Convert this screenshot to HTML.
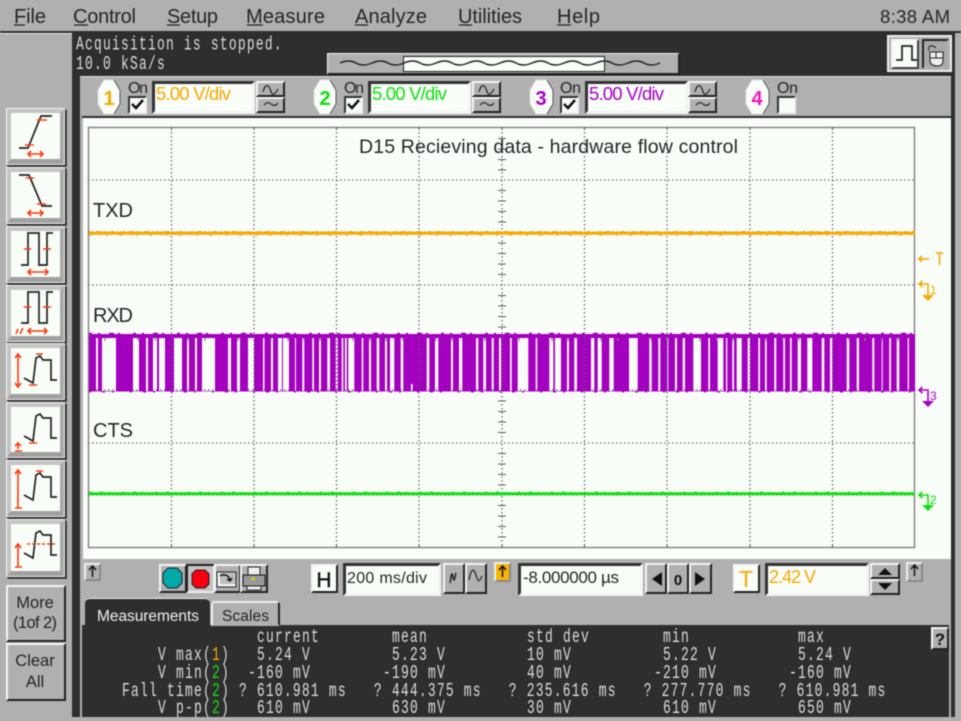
<!DOCTYPE html>
<html><head><meta charset="utf-8"><style>
html,body{margin:0;padding:0;background:#b0b0b0}
#w{position:relative;width:961px;height:721px;overflow:hidden;background:#b0b0b0;filter:blur(.45px)}
#w div{position:absolute;box-sizing:border-box}
.d{background:#2e2e2e}
.g{background:#b0b0b0}
.b{background:#b0b0b0;border:2px solid;border-color:#f4f4f4 #222 #222 #f4f4f4}
.p{background:#a8a8a8;border:2px solid;border-color:#222 #eee #eee #222}
.i{background:#f8fdf8;border:3px solid;border-color:#333 #f4f4f4 #f4f4f4 #333}
.l{background:#f8fdf8;border:5px solid;border-color:#c4c4c4 #a8a8a8 #a0a0a0 #c4c4c4;outline:1px solid #f4f4f4;outline-offset:-1px;border-bottom-width:6px;box-shadow:1px 1px 0 #222,2px 2px 0 #444}
.c{background:#f8fdf8;border:2px solid;border-color:#333 #eee #eee #333}
svg{position:absolute;left:0;top:0}
text{font-family:"Liberation Sans",sans-serif;fill:#262626;white-space:pre}
.m{font-family:"Liberation Mono",monospace;font-size:18px;fill:#dcdcdc;letter-spacing:1.7px}
.r{fill:none;stroke:#fa3c10;stroke-width:1.6}
.k{fill:none;stroke:#222;stroke-width:1.7}
</style></head><body><div id="w">
<div class="d" style="left:0;top:31px;width:961px;height:2px"></div>
<div style="left:0;top:33px;width:72px;height:1px;background:#eee"></div>
<div class="d" style="left:72px;top:33px;width:883px;height:684px"></div>
<div class="g" style="left:80px;top:76px;width:871px;height:641px"></div>
<div style="left:80px;top:76px;width:871px;height:1px;background:#ddd"></div>
<div class="d" style="left:82px;top:116px;width:869px;height:2px"></div>
<div style="left:83px;top:118px;width:868px;height:441px;background:#f8fdf8"></div>
<div class="d" style="left:82px;top:625px;width:867px;height:92px"></div>
<div class="d" style="left:85px;top:598px;width:125px;height:30px;border-radius:5px 5px 0 0;border-top:1px solid #eee"></div>
<div class="g" style="left:85px;top:717px;width:866px;height:2px"></div>

<!-- left buttons -->
<div class="l" style="left:6px;top:108px;width:59px;height:57px"></div>
<div class="l" style="left:6px;top:167px;width:59px;height:57px"></div>
<div class="l" style="left:6px;top:226px;width:59px;height:57px"></div>
<div class="l" style="left:6px;top:285px;width:59px;height:57px"></div>
<div class="l" style="left:6px;top:343px;width:59px;height:57px"></div>
<div class="l" style="left:6px;top:402px;width:59px;height:56px"></div>
<div class="l" style="left:6px;top:460px;width:59px;height:57px"></div>
<div class="l" style="left:6px;top:519px;width:59px;height:58px"></div>
<div class="b" style="left:6px;top:585px;width:60px;height:57px"></div>
<div class="b" style="left:6px;top:643px;width:60px;height:58px"></div>

<!-- channel row -->
<div class="c" style="left:128px;top:96px;width:19px;height:18px"></div>
<div class="i" style="left:152px;top:81px;width:103px;height:33px"></div>
<div class="b" style="left:256px;top:81px;width:29px;height:16px"></div>
<div class="b" style="left:256px;top:97px;width:29px;height:16px"></div>
<div class="c" style="left:344px;top:96px;width:19px;height:18px"></div>
<div class="i" style="left:368px;top:81px;width:103px;height:33px"></div>
<div class="b" style="left:472px;top:81px;width:29px;height:16px"></div>
<div class="b" style="left:472px;top:97px;width:29px;height:16px"></div>
<div class="c" style="left:560px;top:96px;width:19px;height:18px"></div>
<div class="i" style="left:585px;top:81px;width:103px;height:33px"></div>
<div class="b" style="left:688px;top:81px;width:29px;height:16px"></div>
<div class="b" style="left:688px;top:97px;width:29px;height:16px"></div>
<div class="c" style="left:777px;top:96px;width:19px;height:18px"></div>

<!-- timeline -->
<div class="b" style="left:327px;top:53px;width:353px;height:22px;border-width:1px 2px 2px 1px"></div>
<div style="left:403px;top:56px;width:202px;height:16px;background:#f8fdf8;border:1px solid #222"></div>

<!-- top right -->
<div style="left:887px;top:35px;width:65px;height:37px;background:#b0b0b0;border:2px solid #eee"></div>
<div class="b" style="left:891px;top:39px;width:28px;height:30px;background:#f8fdf8;border-color:#f4f4f4 #444 #444 #f4f4f4"></div>
<div class="p" style="left:922px;top:39px;width:27px;height:30px;border-color:#222 #b0b0b0 #b0b0b0 #222"></div>

<!-- bottom row -->
<div class="b" style="left:84px;top:563px;width:17px;height:18px;border-color:#eee #888 #888 #eee"></div>
<div class="b" style="left:159px;top:564px;width:28px;height:29px"></div>
<div class="p" style="left:186px;top:564px;width:29px;height:29px;background:#c4c4c4;border-color:#222 #eee #eee #222"></div>
<div class="b" style="left:214px;top:564px;width:27px;height:29px"></div>
<div class="b" style="left:240px;top:564px;width:28px;height:29px"></div>
<div class="b" style="left:311px;top:564px;width:27px;height:29px;background:#f8fdf8"></div>
<div class="i" style="left:343px;top:563px;width:98px;height:33px"></div>
<div class="b" style="left:443px;top:563px;width:22px;height:31px"></div>
<div class="b" style="left:465px;top:563px;width:22px;height:31px"></div>
<div class="b" style="left:494px;top:562px;width:17px;height:20px;background:#fbb400;border-color:#eee #888 #888 #eee"></div>
<div class="i" style="left:518px;top:563px;width:125px;height:33px"></div>
<div class="b" style="left:645px;top:563px;width:22px;height:31px"></div>
<div class="b" style="left:667px;top:563px;width:22px;height:31px"></div>
<div class="b" style="left:689px;top:563px;width:23px;height:31px"></div>
<div class="b" style="left:733px;top:564px;width:27px;height:29px;background:#f8fdf8"></div>
<div class="i" style="left:765px;top:563px;width:104px;height:33px"></div>
<div class="b" style="left:870px;top:563px;width:30px;height:16px"></div>
<div class="b" style="left:870px;top:579px;width:30px;height:16px"></div>
<div class="b" style="left:906px;top:562px;width:17px;height:20px;border-color:#eee #888 #888 #eee"></div>
<div class="g" style="left:211px;top:601px;width:69px;height:25px;border:2px solid;border-color:#eee #222 transparent #eee;border-radius:4px 4px 0 0"></div>
<div class="b" style="left:931px;top:627px;width:18px;height:23px"></div>

<svg width="961" height="721" viewBox="0 0 961 721">
<!-- menu -->
<g font-size="20">
<text x="14" y="23" textLength="32">File</text>
<text x="73" y="23" textLength="63">Control</text>
<text x="167" y="23" textLength="51">Setup</text>
<text x="246" y="23" textLength="79">Measure</text>
<text x="355" y="23" textLength="72">Analyze</text>
<text x="458" y="23" textLength="64">Utilities</text>
<text x="557" y="23" textLength="43">Help</text>
<text x="880" y="23" textLength="70" font-size="18.5">8:38 AM</text>
</g>
<path d="M14 25h11M74 25h14M167 25h13M247 25h16M355 25h13M459 25h13M557 25h14" stroke="#222" stroke-width="1.2"/>

<!-- status -->
<text class="m" transform="translate(76,49.5) scale(.72,1.1)">Acquisition is stopped.</text>
<text class="m" transform="translate(76,69) scale(.72,1.1)">10.0 kSa/s</text>

<!-- timeline wave -->
<path d="M340 63q9-4 16 0t16 0 16 0 16 0 16 0 16 0 16 0 16 0 16 0 16 0 16 0 16 0 16 0 16 0 16 0 16 0 16 0 16 0 16 0 16 0" fill="none" stroke="#222" stroke-width="1.4"/>

<!-- top right icons -->
<path d="M896 60h6V46h10v14h5" class="k"/>
<path d="M929 51c-2-5 3-7 7-3" fill="none" stroke="#222"/>
<path d="M930 52h13v9q0 5-6 5t-7-5z" fill="#eee" stroke="#222"/>
<path d="M930 58h13M936 52v6" stroke="#222"/>

<!-- channels -->
<g stroke="#ddd" fill="#f8fdf8">
<polygon points="104,80 114,80 120,90 120,104 114,114 104,114 98,104 98,90"/>
<polygon points="320,80 330,80 336,90 336,104 330,114 320,114 314,104 314,90"/>
<polygon points="536,80 547,80 553,90 553,104 547,114 536,114 530,104 530,90"/>
<polygon points="752,80 763,80 769,90 769,104 763,114 752,114 746,104 746,90"/>
</g>
<path d="M114 80l6 10v14l-6 10M330 80l6 10v14l-6 10M547 80l6 10v14l-6 10M763 80l6 10v14l-6 10" fill="none" stroke="#555"/>
<g font-size="20" font-weight="bold" text-anchor="middle">
<text x="109" y="105" style="fill:#f8a800">1</text>
<text x="325" y="105" style="fill:#10e010">2</text>
<text x="541" y="105" style="fill:#a800c8">3</text>
<text x="757" y="105" style="fill:#f018c0">4</text>
</g>
<g font-size="16">
<text x="128" y="93" textLength="20">On</text>
<text x="344" y="93" textLength="20">On</text>
<text x="560" y="93" textLength="21">On</text>
<text x="777" y="93" textLength="21">On</text>
</g>
<path d="M132 104l4 4 7-8M348 104l4 4 7-8M564 104l4 4 7-8" fill="none" stroke="#111" stroke-width="2.6"/>
<g font-size="18.5">
<text x="156" y="100" textLength="75" style="fill:#f8a800">5.00 V/div</text>
<text x="372" y="100" textLength="75" style="fill:#10e010">5.00 V/div</text>
<text x="589" y="100" textLength="75" style="fill:#a800c8">5.00 V/div</text>
</g>
<g fill="none" stroke="#222" stroke-width="1.2">
<path d="M263 92c2-8 5-8 7-3s2 6 4 5 3-3 4-5"/>
<path d="M264 105c3-3 5-3 7-1s5 2 7-1"/>
<path d="M479 92c2-8 5-8 7-3s2 6 4 5 3-3 4-5M480 105c3-3 5-3 7-1s5 2 7-1M695 92c2-8 5-8 7-3s2 6 4 5 3-3 4-5M696 105c3-3 5-3 7-1s5 2 7-1"/>
</g>

<!-- grid -->
<rect x="88.5" y="127.5" width="826" height="420" fill="none" stroke="#808080" stroke-width="1.4"/>
<g stroke="#707070" stroke-width="1.2" stroke-dasharray="1.5 2.5">
<path d="M88 180H914M88 232H914M88 285H914M88 337.5H914M88 390H914M88 443H914M88 495H914"/>
</g>
<!-- purple signal with holes -->
<path fill="#a400c0" fill-rule="evenodd" d="M89 334H915V391.500H89Z
M96 338h2v53h-2zM102 338h14v53h-14zM133 338h6v53h-6zM146 338h2v53h-2zM153 338h4v53h-4zM159 338h6v53h-6zM174 338h8v53h-8zM187 338h2v53h-2zM195 338h2v53h-2zM202 338h13v53h-13zM228 338h3v53h-3zM237 338h3v53h-3zM248 338h6v53h-6zM263 338h1.500v53h-1.500zM271 338h2v53h-2zM278 338h4v53h-4zM283 338h6v53h-6z
M295 338h1v53h-1zM302.300 338h2v53h-2zM312.300 338h1.700v53h-1.700zM319 338h2v53h-2zM327.300 338h2.700v53h-2.700zM335.700 338h2v53h-2zM341.700 338h1.600v53h-1.600zM345 338h1.700v53h-1.700zM348.300 338h6v53h-6zM361.700 338h1.600v53h-1.600zM369 338h2v53h-2zM376.700 338h2.600v53h-2.600zM385 338h2v53h-2zM390 338h4.300v53h-4.300zM400.700 338h2.600v53h-2.600zM411 384h1.700v7h-1.700zM426.700 338h2.600v53h-2.600zM435 338h3.300v53h-3.300zM451 338h2v53h-2zM459 338h3.300v53h-3.300zM476 338h2.300v53h-2.300zM483.300 338h2.700v53h-2.700zM491.700 338h2v53h-2zM499 338h2v53h-2z
M510 338h1.700v53h-1.700zM517.700 338h10.600v53h-10.600zM535.700 338h1.600v53h-1.600zM549.300 338h4v53h-4zM555 338h6v53h-6zM567 338h2v53h-2zM574.300 338h2.700v53h-2.700zM591 338h3.300v53h-3.300zM597.700 338h4v53h-4zM609.300 338h4.400v53h-4.400zM629 338h8.700v53h-8.700zM649.300 338h2.400v53h-2.400zM658.300 338h2v53h-2zM667.300 338h1v53h-1zM675 338h2v53h-2zM682.700 338h2.300v53h-2.300zM693.300 338h7.700v53h-7.700zM708.300 338h1.700v53h-1.700z
M717.700 338h5.600v53h-5.600zM726 338h1.300v53h-1.300zM732.300 338h1.700v53h-1.700zM736.700 338h5v53h-5zM747.700 338h2.300v53h-2.300zM758.300 338h1.700v53h-1.700zM765 338h1.700v53h-1.700zM774.300 338h2v53h-2zM783.300 338h1.700v53h-1.700zM790 338h1.700v53h-1.700zM797.700 338h3.300v53h-3.300zM807.300 338h5v53h-5zM821.700 338h2.600v53h-2.600zM830 338h2.300v53h-2.300zM846.700 338h2.600v53h-2.600zM856.700 338h2.300v53h-2.300zM872.300 338h2v53h-2zM881.700 338h1v53h-1zM889.300 338h1.700v53h-1.700zM896.700 338h2.600v53h-2.600zM907.700 338h1.300v53h-1.300z"/>
<path d="M89 333.500h826" stroke="#a400c0" stroke-width="1.500" stroke-dasharray="3 6 2 9 5 4 2 13" fill="none"/>
<path d="M89 392h826" stroke="#a400c0" stroke-width="1" stroke-dasharray="2 11 3 7 2 16" fill="none"/>
<!-- ticks -->
<path d="M105 338v3M138 338v3M155 338v3M188 338v3M205 338v3M238 338v3M271 338v3M288 338v3M304 338v3M320 338v3M353 338v3M370 338v3M386 338v3M403 338v3M436 338v3M452 338v3M485 338v3M519 338v3M552 338v3M568 338v3M601 338v3M618 338v3M651 338v3M667 338v3M700 338v3M717 338v3M733 338v3M766 338v3M783 338v3M799 338v3M849 338v3M865 338v3M882 338v3M898 338v3" stroke="#888" stroke-width="1.300"/>
<g stroke="#606060" stroke-width="1.2" stroke-dasharray="1.5 2.5">
<path d="M171.500 128V547M254 128V547M336.500 128V547M419 128V547M502 128V547M584.500 128V547M667 128V547M750 128V547M832.500 128V547"/>
</g>
<path d="M171.500 127v3M254 127v3M336.500 127v3M419 127v3M502 127v3M584.500 127v3M667 127v3M750 127v3M832.500 127v3M171.500 548v-3M254 548v-3M336.500 548v-3M419 548v-3M502 548v-3M584.500 548v-3M667 548v-3M750 548v-3M832.500 548v-3M498 138.500h8M498 149h8M498 159.500h8M498 170h8M498 190.500h8M498 201h8M498 211.500h8M498 222h8M498 243h8M498 253.500h8M498 264h8M498 274.500h8M498 295.500h8M498 306h8M498 316.500h8M498 327h8M498 401h8M498 411.500h8M498 422h8M498 432.500h8M498 453.500h8M498 464h8M498 474.500h8M498 485h8M498 505.500h8M498 516h8M498 526.500h8M498 537h8" stroke="#606060" stroke-width="1"/>
<!-- amber / green -->
<path d="M89 233.300H915" stroke="#f8a800" stroke-width="3"/>
<path d="M89 231.500h826" stroke="#f8a800" stroke-width="1" stroke-dasharray="2 5 4 3 1 7 3 9" fill="none"/>
<path d="M89 235.300h826" stroke="#f8a800" stroke-width=".9" stroke-dasharray="3 8 1 5 2 11" fill="none"/>
<path d="M89 493.800H915" stroke="#10e010" stroke-width="3"/>
<path d="M89 492h826" stroke="#10e010" stroke-width=".9" stroke-dasharray="2 9 3 6 1 12" fill="none"/>
<!-- labels -->
<text x="359" y="153" font-size="19.5" textLength="379">D15 Recieving data - hardware flow control</text>
<text x="93" y="217" font-size="20" textLength="40">TXD</text>
<text x="93" y="322" font-size="20" textLength="40">RXD</text>
<text x="93" y="437" font-size="20" textLength="40">CTS</text>
<!-- markers -->
<g fill="none" stroke="#f8a800" stroke-width="1.600"><path d="M919 259h10M922 256l-3 3 3 3M936 253h7M939.500 253v12"/>
<path d="M919 284h9v12M922.500 281l-3.500 3 3.500 3"/></g>
<path d="M922 295h12l-6 6z" fill="#f8a800"/>
<text x="930" y="294" font-size="12" style="fill:#f8a800">1</text>
<g fill="none" stroke="#a800c8" stroke-width="1.600"><path d="M919 390h9v12M922.500 387l-3.500 3 3.500 3"/></g>
<path d="M922 401h12l-6 6z" fill="#a800c8"/>
<text x="930" y="400" font-size="12" style="fill:#a800c8">3</text>
<g fill="none" stroke="#10e010" stroke-width="1.600"><path d="M919 495h9v12M922.500 492l-3.500 3 3.500 3"/></g>
<path d="M922 505h12l-6 6z" fill="#10e010"/>
<text x="930" y="504" font-size="12" style="fill:#10e010">2</text>

<!-- left icons -->
<path class="k" d="M19 148h9l13-32h11"/><path class="r" d="M25 145h9M37 120h10"/>
<path class="r" d="M29 154h14M31 151l-3 3 3 3M40 151l3 3-3 3" stroke-width="2"/>
<path class="k" d="M19 175h10l13 31h10"/><path class="r" d="M26 178h8M37 204h9"/>
<path class="r" d="M29 213h14M31 210l-3 3 3 3M40 210l3 3-3 3" stroke-width="2"/>
<path class="k" d="M21 265h7v-32h11v32h8v-32h6"/><path class="r" d="M24 249h7M43 249h8"/>
<path class="r" d="M28 272h20M31 269l-3 3 3 3M45 269l3 3-3 3" stroke-width="1.800"/>
<path class="k" d="M21 323h7v-31h11v31h8v-31h6"/><path class="r" d="M24 307h7M43 307h8"/>
<path class="r" d="M28 331h19M31 328l-3 3 3 3M44 328l3 3-3 3M16 334l2-5M20 334l3-6" stroke-width="1.600"/>

<path class="k" d="M24 378l9 5 3-25 4-2 3 4h8v20h6"/>
<path class="r" d="M36 354h7M29 385h8M18 355v31M15 358l3-4 3 4M15 383l3 4 3-4" stroke-width="1.800"/>
<path class="k" d="M24 436l9 5 3-25 4-2 3 4h8v20h6"/>
<path class="r" d="M29 443h8M15 451h7M18 449v-5M15 446l3-3 3 3" stroke-width="1.800"/>
<path class="k" d="M24 495l9 5 3-25 4-2 3 4h8v20h6"/>
<path class="r" d="M36 471h7M15 508h7M18 508v-37M15 474l3-4 3 4" stroke-width="1.800"/>
<path class="k" d="M24 553l9 5 3-25 4-2 3 4h8v20h6"/>
<path class="r" d="M27 544h30" stroke-dasharray="3 2"/>
<path class="r" d="M15 567h7M18 567v-22M15 548l3-4 3 4" stroke-width="1.800"/>

<g font-size="16.500" text-anchor="middle">
<text x="35" y="608">More</text><text x="35" y="628" textLength="44">(1of 2)</text>
<text x="35" y="666">Clear</text><text x="35" y="687">All</text>
</g>

<!-- bottom icons -->
<path d="M92.500 577v-10M89 570l3.500-4 3.500 4M914.500 576v-10M911 569l3.500-4 3.500 4M502.500 577v-10M499 570l3.500-4 3.500 4" fill="none" stroke="#111" stroke-width="1.500"/>
<polygon points="168,568 177,568 182,573 182,583 177,588 168,588 163,583 163,573" fill="#00a8a8" stroke="#222"/>
<polygon points="196,570 205,570 209,574 209,584 205,588 196,588 192,584 192,574" fill="#f80010" stroke="#222"/>
<path d="M217 572h19v15h-19z" fill="#f4f4f4" stroke="#222"/>
<path d="M220 584h16v-12l-16 0z" fill="#555" opacity=".35"/>
<path d="M220 576c5-3 9 0 10 4M227 579l3 2 2-3" fill="none" stroke="#111" stroke-width="1.400"/>
<path d="M248 567h12v8h-12z" fill="#eee" stroke="#222"/>
<path d="M243 575h22v11h-22z" fill="#999" stroke="#111"/>
<path d="M247 586h14v4h-14z" fill="#eee" stroke="#222"/>
<path d="M251 579h4" stroke="#f8c800" stroke-width="2"/>
<text x="324" y="587" font-size="21" text-anchor="middle" style="fill:#111;stroke:#111;stroke-width:.4">H</text>
<text x="347" y="583" font-size="16" textLength="80">200 ms/div</text>
<path d="M450 583c1-4 1-9 2-9s1 6 2 6 1-5 2-7" fill="none" stroke="#222" stroke-width="1.500"/>
<path d="M469 580c2-12 5-12 7-5s3 8 6 1" fill="none" stroke="#222" stroke-width="1.200"/>
<text x="523" y="583" font-size="17" textLength="96">-8.000000 µs</text>
<path d="M662 572v14l-10-7zM695 572v14l10-7z" fill="#111"/>
<text x="678" y="585" font-size="15" font-weight="bold" text-anchor="middle" style="fill:#111">0</text>
<text x="746" y="587" font-size="23" text-anchor="middle" style="fill:#f8a800">T</text>
<text x="769" y="583" font-size="18" textLength="47" style="fill:#f8a800">2.42 V</text>
<path d="M878 575h14l-7-7zM878 583h14l-7 7z" fill="#111"/>

<!-- tabs -->
<text x="97" y="621" font-size="15.500" textLength="102" style="fill:#f0f0f0">Measurements</text>
<text x="222" y="621" font-size="15.500" textLength="47">Scales</text>
<text x="940" y="645" font-size="17" font-weight="bold" text-anchor="middle" style="fill:#111">?</text>

<!-- measurements -->
<text class="m" transform="translate(257,642) scale(.72,1.1)">current</text>
<text class="m" transform="translate(392,642) scale(.72,1.1)">mean</text>
<text class="m" transform="translate(527,642) scale(.72,1.1)">std dev</text>
<text class="m" transform="translate(663,642) scale(.72,1.1)">min</text>
<text class="m" transform="translate(798,642) scale(.72,1.1)">max</text>

<text class="m" transform="translate(158,660) scale(.72,1.1)">V max(<tspan style="fill:#f8a800">1</tspan>)</text>
<text class="m" transform="translate(257,660) scale(.72,1.1)">5.24 V</text>
<text class="m" transform="translate(392,660) scale(.72,1.1)">5.23 V</text>
<text class="m" transform="translate(527,660) scale(.72,1.1)">10 mV</text>
<text class="m" transform="translate(663,660) scale(.72,1.1)">5.22 V</text>
<text class="m" transform="translate(798,660) scale(.72,1.1)">5.24 V</text>

<text class="m" transform="translate(158,678) scale(.72,1.1)">V min(<tspan style="fill:#10e010">2</tspan>)</text>
<text class="m" transform="translate(248,678) scale(.72,1.1)">-160 mV</text>
<text class="m" transform="translate(383,678) scale(.72,1.1)">-190 mV</text>
<text class="m" transform="translate(527,678) scale(.72,1.1)">40 mV</text>
<text class="m" transform="translate(654,678) scale(.72,1.1)">-210 mV</text>
<text class="m" transform="translate(789,678) scale(.72,1.1)">-160 mV</text>

<text class="m" xml:space="preserve" transform="translate(122,696) scale(.72,1.1)">Fall time(<tspan style="fill:#10e010">2</tspan>) ? 610.981 ms   ? 444.375 ms   ? 235.616 ms   ? 277.770 ms   ? 610.981 ms</text>

<text class="m" transform="translate(158,713) scale(.72,1.1)">V p-p(<tspan style="fill:#10e010">2</tspan>)</text>
<text class="m" transform="translate(257,713) scale(.72,1.1)">610 mV</text>
<text class="m" transform="translate(392,713) scale(.72,1.1)">630 mV</text>
<text class="m" transform="translate(527,713) scale(.72,1.1)">30 mV</text>
<text class="m" transform="translate(663,713) scale(.72,1.1)">610 mV</text>
<text class="m" transform="translate(798,713) scale(.72,1.1)">650 mV</text>
</svg>
</div></body></html>
